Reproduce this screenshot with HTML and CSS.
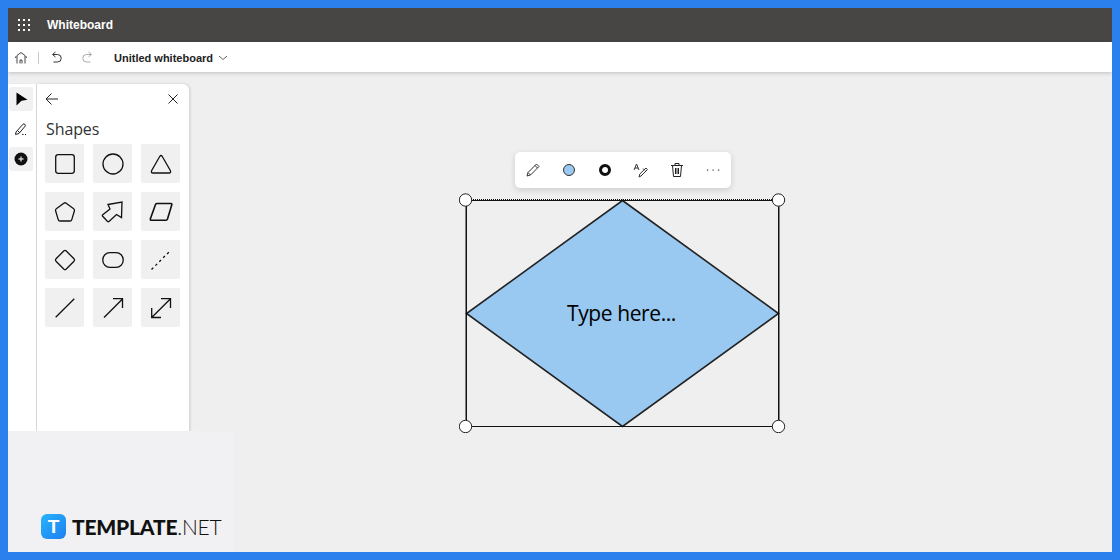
FILE: index.html
```html
<!DOCTYPE html>
<html lang="en">
<head>
<meta charset="utf-8">
<title>Whiteboard</title>
<link rel="stylesheet" href="styles.css">
</head>
<body>
<div class="frame">
  <header class="titlebar">
    <svg class="waffle" width="14" height="14" viewBox="0 0 14 14" fill="#fff"><rect x="1" y="1" width="2" height="2"/><rect x="6" y="1" width="2" height="2"/><rect x="11" y="1" width="2" height="2"/><rect x="1" y="6" width="2" height="2"/><rect x="6" y="6" width="2" height="2"/><rect x="11" y="6" width="2" height="2"/><rect x="1" y="11" width="2" height="2"/><rect x="6" y="11" width="2" height="2"/><rect x="11" y="11" width="2" height="2"/></svg>
    <span class="app-name">Whiteboard</span>
  </header>
  <nav class="toolbar">
    <svg class="tb-home" width="14" height="14" viewBox="0 0 14 14" fill="none" stroke="#444" stroke-width="1"><path d="M1.500 7 Q1.500 5.500 3 4.500L7 1.500l4 3Q12.500 5.500 12.500 7M3 5v7.500M11 5v7.500M6 12.500V9h2v3.500"/></svg>
    <span class="tb-sep"></span>
    <svg class="tb-undo" width="14" height="14" viewBox="0 0 14 14" fill="none" stroke="#333" stroke-width="1"><path d="M5.500 1 2.500 3.500 5.500 6M3 3.500h4.500a3.700 3.700 0 0 1 0 7.500H3.500"/></svg>
    <svg class="tb-redo" width="14" height="14" viewBox="0 0 14 14" fill="none" stroke="#aaa" stroke-width="1"><path d="M8.500 1 11.500 3.500 8.500 6M11 3.500H6.500a3.700 3.700 0 0 0 0 7.500H10.500"/></svg>
    <span class="doc-name">Unitled whiteboard</span>
    <svg class="tb-chev" width="10" height="10" viewBox="0 0 10 10" fill="none" stroke="#666" stroke-width="1"><path d="M1 3l4 3.500L9 3"/></svg>
  </nav>
  <main class="workspace">
    <aside class="rail">
      <button class="rail-btn active"><svg width="14" height="14" viewBox="0 0 14 14"><path d="M2.500 0.500 13.500 7.800 7.500 8.800 2.500 13.500z" fill="#000"/></svg></button>
      <button class="rail-btn"><svg width="16" height="16" viewBox="0 0 16 16" fill="none" stroke="#222" stroke-width="1"><path d="M3 11 10 3.200c1-1 3 .6 2.200 1.900L6 12.500l-3.500 1zM4.500 9.500l2.500 2.500M9 13.500h1.500M12 13.500h1"/></svg></button>
      <button class="rail-btn active"><svg width="14" height="14" viewBox="0 0 14 14"><circle cx="7" cy="7" r="6.500" fill="#111"/><path d="M7 4.500v5M4.500 7h5" stroke="#ccc" stroke-width="1.400"/></svg></button>
    </aside>
    <section class="panel">
      <div class="panel-head">
        <svg width="14" height="14" viewBox="0 0 14 14" fill="none" stroke="#222" stroke-width="1"><path d="M13 7H1M6.500 1.500 1 7l5.500 5.500"/></svg>
        <svg width="12" height="12" viewBox="0 0 12 12" fill="none" stroke="#222" stroke-width="1"><path d="M1.500 1.500l9 9M10.500 1.500l-9 9"/></svg>
      </div>
      <h2 class="panel-title">Shapes</h2>
      <div class="shape-grid">
        <div class="shape"><svg viewBox="0 0 24 24"><rect x="2.700" y="2.700" width="18.600" height="18.600" rx="2.500"/></svg></div>
        <div class="shape"><svg viewBox="0 0 24 24"><circle cx="12" cy="12" r="10"/></svg></div>
        <div class="shape"><svg viewBox="0 0 24 24"><path d="M10.700 4.500Q12 2.500 13.300 4.500L21.300 18.500Q22.300 21 20 21H4Q1.700 21 2.700 18.500Z"/></svg></div>
        <div class="shape"><svg viewBox="0 0 24 24"><path d="M10.800 3.200Q12 2.300 13.200 3.200L20.700 8.800Q21.800 9.500 21.400 10.800L18.800 19.600Q18.400 21 17 21H7Q5.600 21 5.200 19.600L2.600 10.800Q2.200 9.500 3.300 8.800Z"/></svg></div>
        <div class="shape"><svg viewBox="0 0 24 24"><path d="M7 4.500 21 2 20.500 17.500 15.500 14.500 8 21.500Q7.300 22 6.500 21.500L1.500 16Q1 15.300 1.700 14.700L9 9Z"/></svg></div>
        <div class="shape"><svg viewBox="0 0 24 24" class="heavy"><path d="M6.500 4.500Q7 3.500 8 3.500H22Q23.200 3.500 22.800 4.800L18.500 19Q18 20.300 17 20.300H2.500Q1 20.300 1.400 18.800Z"/></svg></div>
        <div class="shape"><svg viewBox="0 0 24 24"><path d="M11 2.800Q12 1.900 13 2.800L21 10.800Q22 12 21 13.200L13 21.200Q12 22.100 11 21.200L3 13.200Q2 12 3 10.800Z"/></svg></div>
        <div class="shape"><svg viewBox="0 0 24 24"><rect x="1.800" y="4.700" width="20.400" height="14.600" rx="7"/></svg></div>
        <div class="shape"><svg viewBox="0 0 24 24"><path d="M2.500 21.500 21.500 2.500" stroke-dasharray="2.500 3"/></svg></div>
        <div class="shape"><svg viewBox="0 0 24 24"><path d="M2.700 21.300 21.300 2.700"/></svg></div>
        <div class="shape"><svg viewBox="0 0 24 24"><path d="M3 21.500 21.500 3M12 2.700H21.500V12"/></svg></div>
        <div class="shape"><svg viewBox="0 0 24 24"><path d="M2.700 21.500 21.500 2.700M12 2.700H21.500V12M2.700 12V21.500H12"/></svg></div>
      </div>
    </section>
    <div class="canvas">
      <svg class="diagram" width="330" height="240" viewBox="0 0 330 240">
        <polygon class="diamond" points="163.500,7.500 319.500,120.500 163.500,233.500 7.500,120.500"/>
        <path class="sel-solid" d="M6.500 233.500H320M7 7.500H320M7.500 7.500V233M319.500 7.500V233"/>
        <path class="sel-dot" d="M6 6.500H320M6.500 6.500V228M320.500 6.500V228"/>
        <circle class="handle" cx="6.500" cy="7" r="6.200"/>
        <circle class="handle" cx="319.500" cy="7" r="6.200"/>
        <circle class="handle" cx="6.500" cy="233.500" r="6.200"/>
        <circle class="handle" cx="319.500" cy="233.500" r="6.200"/>
      </svg>
      <span class="shape-text">Type here...</span>
      <div class="float-bar">
        <svg width="16" height="16" viewBox="0 0 16 16" fill="none" stroke="#333" stroke-width="1"><path d="M2 14l1-3.500L11.500 2 14 4.500 5.500 13zM3 10.500l2.500 2.500M10 3.500 12.500 6"/></svg>
        <svg width="16" height="16" viewBox="0 0 16 16"><circle cx="8" cy="8" r="5.500" fill="#99c8f0" stroke="#333"/></svg>
        <svg width="16" height="16" viewBox="0 0 16 16"><circle cx="8" cy="8" r="4.500" fill="#fff" stroke="#111" stroke-width="3"/></svg>
        <svg width="16" height="16" viewBox="0 0 16 16" fill="none" stroke="#333" stroke-width="1"><path d="M1 8 3.500 2 6 8M2 6h3M6 15l.8-3L13 6l1.500 1.500L8 14zM10 6.500l2 2"/></svg>
        <svg width="16" height="16" viewBox="0 0 16 16" fill="none" stroke="#222" stroke-width="1"><path d="M2 3.500h12M6 3.500V1.500h4v2M3.500 3.500 4.500 14.500h7l1-11M6.500 6v6M8 6v6M9.500 6v6"/></svg>
        <svg width="16" height="16" viewBox="0 0 16 16" fill="#333"><rect x="2" y="7.500" width="1.200" height="1.200"/><rect x="7.500" y="7.500" width="1.200" height="1.200"/><rect x="13" y="7.500" width="1.200" height="1.200"/></svg>
      </div>
    </div>
  </main>
  <div class="watermark">
    <div class="brand">
      <span class="brand-mark">T</span>
      <span class="brand-text"><b>TEMPLATE</b>.NET</span>
    </div>
  </div>
</div>
</body>
</html>
```
FILE: styles.css
```css
* { box-sizing: border-box; }
html, body { margin: 0; height: 100%; }
body { overflow: hidden; font-family: "Liberation Sans", Arial, sans-serif; }

.frame {
  position: relative;
  width: 1120px;
  height: 560px;
  border: 8px solid #2b80ee;
  background: #efefef;
  display: flex;
  flex-direction: column;
  overflow: hidden;
}

.titlebar {
  flex: 0 0 34px;
  background: #484644;
  display: flex;
  align-items: center;
  padding-left: 9px;
  color: #fff;
}
.app-name { margin-left: 16px; font-size: 12px; font-weight: 700; }

.toolbar {
  flex: 0 0 30px;
  background: #fff;
  display: flex;
  align-items: center;
  padding: 1px 0 0 6px;
  box-shadow: 0 1px 4px rgba(0, 0, 0, .2);
  position: relative;
  z-index: 2;
}
.tb-sep { width: 1px; height: 12px; background: #c8c8c8; margin: 0 11px 0 10px; }
.tb-redo { margin-left: 16px; }
.doc-name { margin-left: 20px; font-size: 11px; font-weight: 700; color: #222; }
.tb-chev { margin-left: 5px; }

.workspace { flex: 1; display: flex; align-items: stretch; padding-top: 12px; min-height: 0; }

.rail {
  width: 28px;
  background: #fff;
  display: flex;
  flex-direction: column;
  align-items: flex-start;
  gap: 6px;
  padding: 3px 0 0 1px;
  box-shadow: 1px 0 1px rgba(0, 0, 0, .08);
}
.rail-btn {
  width: 24px;
  height: 24px;
  border: 0;
  padding: 0;
  background: transparent;
  border-radius: 3px;
  display: flex;
  align-items: center;
  justify-content: center;
}
.rail-btn.active { background: #f1f1f1; }

.panel {
  width: 152px;
  margin-left: 1px;
  background: #fff;
  border-top-right-radius: 6px;
  box-shadow: 1px 0 3px rgba(0, 0, 0, .15);
  padding: 8px 9px 0 8px;
}
.panel-head { display: flex; justify-content: space-between; align-items: center; height: 14px; padding: 0 1px 0 0; }
.panel-title { margin: 13px 0 5px 1px; font: 400 16px/20px "Open Sans", sans-serif; letter-spacing: -.1px; color: #333; }
.shape-grid { display: grid; grid-template-columns: repeat(3, 39px); grid-auto-rows: 39px; gap: 9px; }
.shape { background: #f0f0f0; border-radius: 2px; display: flex; align-items: center; justify-content: center; }
.shape svg { width: 24px; height: 24px; fill: none; stroke: #111; stroke-width: 1.300; }
.shape svg.heavy { stroke-width: 1.600; }

.canvas { flex: 1; position: relative; }
.diagram { position: absolute; left: 270px; top: 109px; }
.diamond { fill: #99c8f0; stroke: #222; stroke-width: 1.600; stroke-linejoin: miter; }
.sel-solid { fill: none; stroke: #111; stroke-width: 1; }
.sel-dot { fill: none; stroke: #111; stroke-width: 1; stroke-dasharray: 1 1; }
.handle { fill: #fff; stroke: #222; stroke-width: 1; }
.shape-text {
  position: absolute;
  left: 378px;
  top: 214px;
  font: 400 21px/30px "Open Sans", sans-serif;
  letter-spacing: -.4px;
  color: #000;
}
.float-bar {
  position: absolute;
  left: 326px;
  top: 68px;
  width: 216px;
  height: 36px;
  background: #fff;
  border-radius: 5px;
  box-shadow: 0 2px 6px rgba(0, 0, 0, .15);
  display: flex;
  align-items: center;
  justify-content: space-between;
  padding: 0 10px;
}

.watermark {
  position: absolute;
  left: 0;
  bottom: 0;
  width: 226px;
  height: 121px;
  background: #f1f1f3;
  display: flex;
  align-items: flex-end;
  padding: 0 0 13px 33px;
}
.brand { display: flex; align-items: center; gap: 6px; }
.brand-mark {
  width: 25px;
  height: 25px;
  border-radius: 6px;
  background: linear-gradient(135deg, #27b4fb, #1d7ff0);
  color: #fff;
  font: 700 19px/25px "Liberation Sans", sans-serif;
  text-align: center;
}
.brand-text { font: 300 21px/25px Lato, sans-serif; letter-spacing: -.2px; color: #111; }
.brand-text b { font-weight: 900; }
```
